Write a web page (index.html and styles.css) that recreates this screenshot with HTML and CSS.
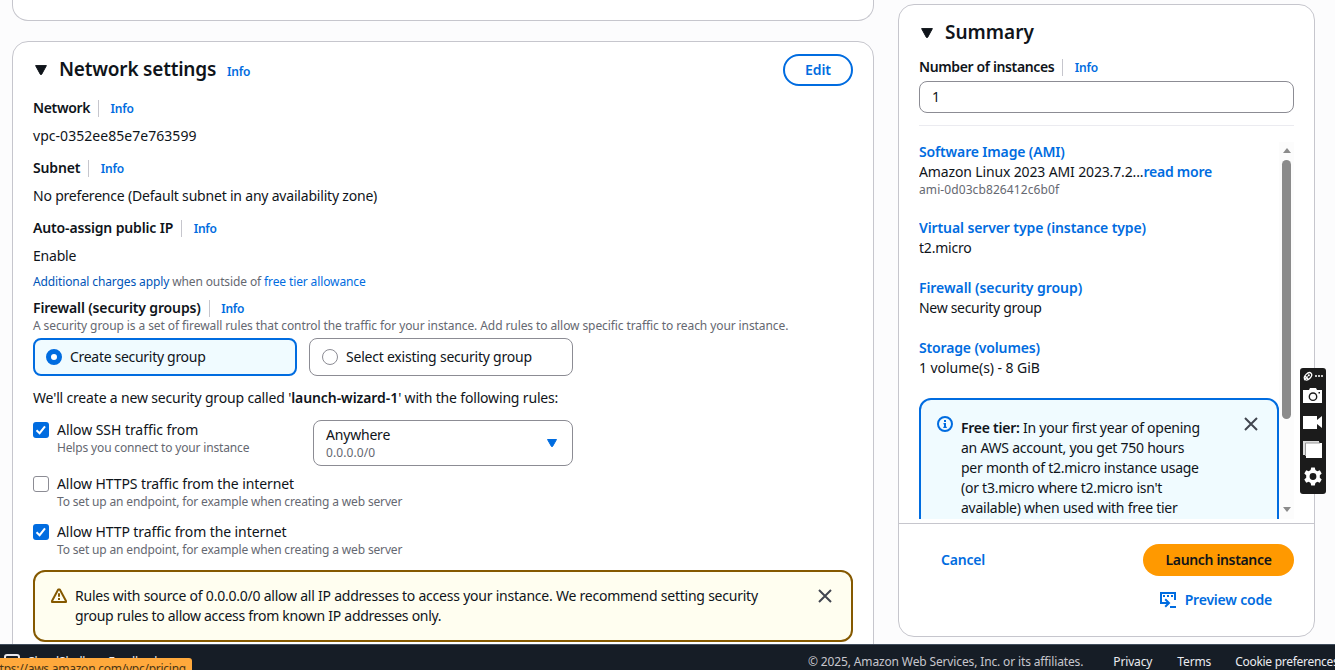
FILE: index.html
```html
<!DOCTYPE html>
<html lang="en">
<head>
<meta charset="utf-8">
<title>Launch an instance | EC2</title>
<link rel="stylesheet" href="styles.css">
</head>
<body>
<div class="app">
  <main class="page">
    <div class="main-col">
      <section class="card card-prev"></section>
      <section class="card card-network">
        <header class="card-head">
          <svg class="caret" width="12" height="10" viewBox="0 0 12 10"><path d="M.6.6h10.8L6.6 9.4H5.4z" fill="#0f141a" stroke="#0f141a" stroke-linejoin="round"/></svg>
          <h2 class="title">Network settings</h2>
          <a class="info info-title">Info</a>
          <button class="btn btn-edit">Edit</button>
        </header>
        <div class="label-row"><b class="label ls-network">Network</b><a class="info">Info</a></div>
        <div class="value value-id">vpc-0352ee85e7e763599</div>
        <div class="label-row"><b class="label ls-subnet">Subnet</b><a class="info">Info</a></div>
        <div class="value">No preference (Default subnet in any availability zone)</div>
        <div class="label-row"><b class="label">Auto-assign public IP</b><a class="info">Info</a></div>
        <div class="value">Enable</div>
        <div class="small charges"><a class="link-dark">Additional charges apply</a> when outside of <a class="link">free tier allowance</a></div>
        <div class="label-row label-firewall"><b class="label">Firewall (security groups)</b><a class="info">Info</a></div>
        <div class="small desc">A security group is a set of firewall rules that control the traffic for your instance. Add rules to allow specific traffic to reach your instance.</div>
        <div class="tiles">
          <div class="tile tile-on"><span class="radio radio-on"></span><span class="ls-create">Create security group</span></div>
          <div class="tile"><span class="radio"></span><span>Select existing security group</span></div>
        </div>
        <p class="rules-note">We'll create a new security group called '<b>launch-wizard-1</b>' with the following rules:</p>
        <div class="ssh-row">
          <div class="check-row">
            <span class="check check-on"><svg width="16" height="16" viewBox="0 0 16 16"><path d="M3.5 8.2 6.6 11.2 12 4.4" fill="none" stroke="#fff" stroke-width="2"/></svg></span>
            <div><div class="ls-ssh">Allow SSH traffic from</div><div class="small">Helps you connect to your instance</div></div>
          </div>
          <div class="select">
            <div><div>Anywhere</div><div class="small small-id">0.0.0.0/0</div></div>
            <svg width="12" height="10" viewBox="0 0 12 10"><path d="M1.5 1.5h9L6.5 8.5h-1z" fill="#006ce0" stroke="#006ce0" stroke-linejoin="round"/></svg>
          </div>
        </div>
        <div class="check-row check-https">
          <span class="check"></span>
          <div><div class="ls-http">Allow HTTPS traffic from the internet</div><div class="small">To set up an endpoint, for example when creating a web server</div></div>
        </div>
        <div class="check-row check-http">
          <span class="check check-on"><svg width="16" height="16" viewBox="0 0 16 16"><path d="M3.5 8.2 6.6 11.2 12 4.4" fill="none" stroke="#fff" stroke-width="2"/></svg></span>
          <div><div class="ls-http">Allow HTTP traffic from the internet</div><div class="small">To set up an endpoint, for example when creating a web server</div></div>
        </div>
        <div class="alert alert-warn">
          <svg class="alert-icon" width="16" height="16" viewBox="0 0 16 16" fill="none" stroke="#855900" stroke-width="2" stroke-linejoin="round"><path d="M7.2 1.6h1.6L15 13v1H1v-1z"/><path d="M8 5.2v3.6M8 10v2"/></svg>
          <p class="alert-text">Rules with source of 0.0.0.0/0 allow all IP addresses to access your instance. We recommend setting security<br><span class="ls-line2">group rules to allow access from known IP addresses only.</span></p>
          <svg class="close" width="16" height="16" viewBox="0 0 16 16"><path d="m2 2 12 12M14 2 2 14" stroke="#424650" stroke-width="2"/></svg>
        </div>
      </section>
    </div>
    <aside class="card summary">
      <header class="sum-head">
        <svg class="caret" width="12" height="10" viewBox="0 0 12 10"><path d="M.6.6h10.8L6.6 9.4H5.4z" fill="#0f141a" stroke="#0f141a" stroke-linejoin="round"/></svg>
        <h2 class="title title-sum">Summary</h2>
      </header>
      <div class="label-row label-number"><b class="label ls-number">Number of instances</b><a class="info">Info</a></div>
      <div class="input">1</div>
      <div class="scroll">
        <div class="scroll-body">
          <div class="sum-item"><a class="sum-link">Software Image (AMI)</a>
            <div class="ls-ami">Amazon Linux 2023 AMI 2023.7.2...<b class="more">read more</b></div>
            <div class="small small-ami">ami-0d03cb826412c6b0f</div></div>
          <div class="sum-item"><a class="sum-link ls-virtual">Virtual server type (instance type)</a><div>t2.micro</div></div>
          <div class="sum-item"><a class="sum-link ls-fw">Firewall (security group)</a><div class="ls-new">New security group</div></div>
          <div class="sum-item"><a class="sum-link ls-storage">Storage (volumes)</a><div class="ls-vol">1 volume(s) - 8 GiB</div></div>
          <div class="alert alert-info">
            <svg class="alert-icon" width="16" height="16" viewBox="0 0 16 16" fill="none" stroke="#006ce0"><circle cx="8" cy="8" r="7" stroke-width="2"/><path d="M8 4v2M8 7v5" stroke-width="2"/><path d="M6.3 7.7H8M6.3 11.4h3.5" stroke-width="1.1"/></svg>
            <p class="alert-text"><b>Free tier:</b> In your first year of opening<br>an AWS account, you get 750 hours<br>per month of t2.micro instance usage<br>(or t3.micro where t2.micro isn't<br>available) when used with free tier</p>
            <svg class="close" width="16" height="16" viewBox="0 0 16 16"><path d="m2 2 12 12M14 2 2 14" stroke="#424650" stroke-width="2"/></svg>
          </div>
        </div>
        <div class="bar"><span class="arrow-up"></span><span class="thumb"></span><span class="arrow-down"></span></div>
      </div>
      <footer class="sum-foot">
        <div class="foot-row"><a class="action">Cancel</a><button class="btn btn-launch">Launch instance</button></div>
        <div class="foot-preview">
          <svg width="17" height="16" viewBox="0 0 17 16" fill="none" stroke="#006ce0" stroke-width="2"><path d="M15 8V1H1v10h7"/><path d="M3 4h2M7 4h2M11 4h2" stroke-width="2"/><path d="M5.2 7.2 9 11l-3.8 3.8"/><path d="M10 15h6"/></svg>
          <a class="action">Preview code</a>
        </div>
      </footer>
    </aside>
  </main>
  <footer class="console-foot">
    <div class="foot-left">
      <svg width="16" height="16" viewBox="0 0 16 16" fill="none" stroke="#e8e8ed" stroke-width="2"><rect x="1" y="1" width="14" height="14" rx="2"/></svg>
      <span>CloudShell</span><span class="feedback">Feedback</span>
    </div>
    <div class="foot-right"><span class="copy">© 2025, Amazon Web Services, Inc. or its affiliates.</span><span>Privacy</span><span>Terms</span><span class="cookie">Cookie preferences</span></div>
  </footer>
  <div class="status"><span class="status-text">https://aws.amazon.com/vpc/pricing</span></div>
  <div class="tools">
    <svg width="26" height="126" viewBox="0 0 26 126" fill="#fff">
      <g transform="rotate(-45 8 8.3)" fill="none" stroke="#fff" stroke-width="1.3"><ellipse cx="8" cy="8.3" rx="4.3" ry="2.7"/><path d="M2.6 8.3h5M6 5.8v5"/></g>
      <circle cx="8.8" cy="7.3" r="1.1"/>
      <path d="M15 7.2h2v1.6h-2zM18 7.2h2v1.6h-2zM21 7.2h2v1.6h-2z"/>
      <path d="M3 22h6l1-2h6l1 2h5v13H3z"/>
      <circle cx="13" cy="28.7" r="3.7" fill="none" stroke="#1b1b1b" stroke-width="1.4"/><path d="M18.5 24h1.5v1.5h-1.5z" fill="#1b1b1b"/>
      <path d="M3 48h14v4l5-4v12l-5-4v5H3z"/>
      <path d="M3 73h16v2H5v12H3z" fill="#ddd"/><path d="M6 75h16v15H6z"/><path d="M5.5 88V75H20" fill="none" stroke="#999"/>
      <path fill-rule="evenodd" d="M11.2 99.5h3.6l.6 2.6 1.9 1.1 2.5-.9 1.9 3.2-1.9 1.8v2.4l1.9 1.8-1.9 3.2-2.5-.9-1.9 1.1-.6 2.6h-3.6l-.6-2.6-1.9-1.1-2.5.9-1.9-3.2 1.9-1.8v-2.4l-1.9-1.8 1.9-3.2 2.5.9 1.9-1.1zM13 105.1a3.4 3.4 0 1 0 0 6.8 3.4 3.4 0 0 0 0-6.8z"/>
    </svg>
  </div>
</div>
</body>
</html>
```
FILE: styles.css
```css
* { box-sizing: border-box; }
body { margin: 0; background: #fcfcfd; color: #0f141a; font: 14px/20px "Noto Sans", "Open Sans", sans-serif; letter-spacing: -0.2px; }
h2, p { margin: 0; }
b { font-weight: 600; }
button { font: inherit; letter-spacing: inherit; }
svg { display: block; flex: none; }
.app { position: relative; width: 1335px; height: 670px; overflow: hidden; display: flex; flex-direction: column; white-space: nowrap; }
.page { height: 644px; flex: none; display: flex; gap: 24px; padding-left: 12px; overflow: hidden; }
.main-col { width: 862px; display: flex; flex-direction: column; gap: 20px; }
.card { background: #fff; border: 1px solid #c6c6cd; border-radius: 16px; }
.card-prev { height: 21px; flex: none; border-top: 0; border-radius: 0 0 16px 16px; }
.card-network { height: 700px; flex: none; padding: 12px 20px; }
.card-head { display: flex; align-items: center; height: 32px; }
.caret { margin-left: 2px; }
.title { font-size: 19px; line-height: 24px; font-weight: 600; letter-spacing: -0.21px; margin-left: 12px; margin-top: -2px; }
.title-sum { letter-spacing: 0; }
.info { color: #006ce0; font-size: 12px; font-weight: 600; letter-spacing: -0.2px; line-height: 16px; }
.info-title { margin-left: 11px; margin-top: 3px; }
.btn { display: block; border-radius: 20px; height: 32px; padding: 0; font-weight: 600; }
.btn-edit { width: 70px; margin-left: auto; background: #fff; border: 2px solid #006ce0; color: #006ce0; letter-spacing: -0.06px; }
.label-row { display: flex; align-items: center; height: 20px; margin-top: 12px; }
.label { letter-spacing: -0.15px; padding-right: 8px; }
.label + .info { border-left: 1px solid #c6c6cd; padding: 1px 0 0 11.5px; }
.ls-network { letter-spacing: -0.36px; }
.ls-number { letter-spacing: -0.37px; }
.value { margin-top: 8px; }
.value-id { letter-spacing: 0.04px; }
.small { font-size: 12px; line-height: 16px; color: #656871; letter-spacing: -0.155px; }
.small-id { letter-spacing: 0.1px; }
.charges { margin-top: 8px; letter-spacing: -0.12px; }
.link { color: #006ce0; }
.link-dark { color: #0055b8; }
.label-firewall { margin-top: 8px; }
.desc { letter-spacing: -0.09px; }
.tiles { display: flex; gap: 12px; margin-top: 4px; }
.tile { width: 264px; height: 38px; border: 1px solid #8c8c94; border-radius: 8px; padding: 0 12px; display: flex; align-items: center; gap: 8px; letter-spacing: -0.22px; }
.tile-on { border: 2px solid #006ce0; background: #f0fbff; padding: 0 11px; }
.ls-create { letter-spacing: -0.3px; }
.radio { width: 16px; height: 16px; border-radius: 50%; border: 1px solid #8c8c94; background: #fff; }
.radio-on { border: 5px solid #006ce0; }
.rules-note { margin-top: 12px; letter-spacing: -0.17px; }
.rules-note b { letter-spacing: -0.07px; }
.ssh-row { display: flex; margin-top: 12px; height: 46px; }
.ssh-row .check-row { width: 280px; }
.check-row { display: flex; gap: 8px; }
.check { width: 16px; height: 16px; margin-top: 2px; border: 1px solid #8c8c94; border-radius: 3px; flex: none; }
.check-on { border: 0; background: #006ce0; }
.check-https { margin-top: 8px; }
.check-http { margin-top: 12px; }
.ls-ssh { letter-spacing: -0.05px; }
.ls-http { letter-spacing: -0.09px; }
.select { width: 260px; height: 46px; border: 1px solid #8c8c94; border-radius: 8px; padding: 4px 14px 4px 12px; display: flex; align-items: center; justify-content: space-between; }
.alert { display: flex; border: 2px solid #855900; border-radius: 12px; background: #fffef0; }
.alert-warn { margin-top: 12px; height: 72px; padding: 14px 18px 14px 16px; }
.alert-icon { margin-top: 2px; }
.alert-text { margin-left: 8px; letter-spacing: -0.23px; }
.ls-line2 { letter-spacing: -0.28px; }
.close { margin: 2px 0 0 auto; }
.summary { width: 417px; height: 633px; margin-top: 4px; flex: none; display: flex; flex-direction: column; }
.sum-head { display: flex; align-items: center; height: 24px; margin: 16px 0 0 20px; }
.label-number { margin: 12px 20px 0; }
.input { height: 32px; flex: none; margin: 4px 20px 0; border: 1px solid #8c8c94; border-radius: 8px; padding: 5px 12px; }
.scroll { margin: 12px 20px 0; border-top: 1px solid #ebebf0; height: 394px; flex: none; display: flex; overflow: hidden; padding-top: 16px; }
.scroll-body { width: 360px; height: 377px; overflow: hidden; }
.sum-item { margin-bottom: 20px; }
.sum-link { display: block; color: #006ce0; font-weight: 600; letter-spacing: -0.15px; }
.ls-ami { letter-spacing: -0.14px; }
.ls-virtual { letter-spacing: -0.11px; }
.ls-fw { letter-spacing: -0.06px; }
.ls-new { letter-spacing: -0.3px; }
.ls-vol { letter-spacing: -0.06px; }
.more { color: #006ce0; letter-spacing: -0.24px; }
.small-ami { letter-spacing: 0.09px; }
.alert-info { border-color: #006ce0; background: #f0fbff; height: 160px; padding: 18px 18px 0 16px; }
.alert-info .alert-text { letter-spacing: -0.25px; }
.alert-info .alert-icon, .alert-info .close { margin-top: -2px; }
.bar { width: 15px; height: 377px; background: #fcfcfc; display: flex; flex-direction: column; align-items: center; }
.arrow-up, .arrow-down { width: 0; border: 4.5px solid transparent; }
.arrow-up { border-top: 0; border-bottom: 5px solid #8b8b8b; margin-top: 6px; }
.thumb { width: 9px; height: 259px; margin-top: 7px; border-radius: 5px; background: #8b8b8b; }
.arrow-down { border-bottom: 0; border-top: 5px solid #8b8b8b; margin-top: 88px; }
.sum-foot { margin-top: 4px; border-top: 1px solid #c6c6cd; padding: 20px 20px 0 42px; }
.foot-row { display: flex; align-items: center; justify-content: space-between; }
.action { color: #006ce0; font-weight: 600; }
.btn-launch { width: 151px; border: 0; background: #ff9900; color: #0f141a; letter-spacing: -0.34px; }
.foot-preview { display: flex; justify-content: flex-end; align-items: center; gap: 8px; margin: 14px 22px 0 0; }
.console-foot { height: 26px; background: #161d26; border-top: 1px solid #414d5c; display: flex; justify-content: space-between; font-size: 12px; line-height: 16px; letter-spacing: -0.14px; color: #ebebf0; padding: 9px 0 0 4px; }
.foot-left { display: flex; gap: 7px; }
.feedback { margin-left: 16px; }
.foot-right { width: 527px; flex: none; display: flex; gap: 25px; }
.copy { color: #c6c6cd; margin-right: 5px; }
.cookie { margin-left: -1px; letter-spacing: -0.28px; }
.status { position: absolute; left: 0; top: 658px; width: 192px; height: 12px; background: #ffa93c; border-top-right-radius: 3px; overflow: hidden; display: flex; justify-content: flex-end; padding-right: 6px; }
.status-text { font-size: 12px; line-height: 21px; letter-spacing: -0.25px; color: #4a3617; }
.tools { position: absolute; left: 1300px; top: 368px; width: 26px; height: 126px; background: #1b1b1b; border-radius: 3px; }
```
